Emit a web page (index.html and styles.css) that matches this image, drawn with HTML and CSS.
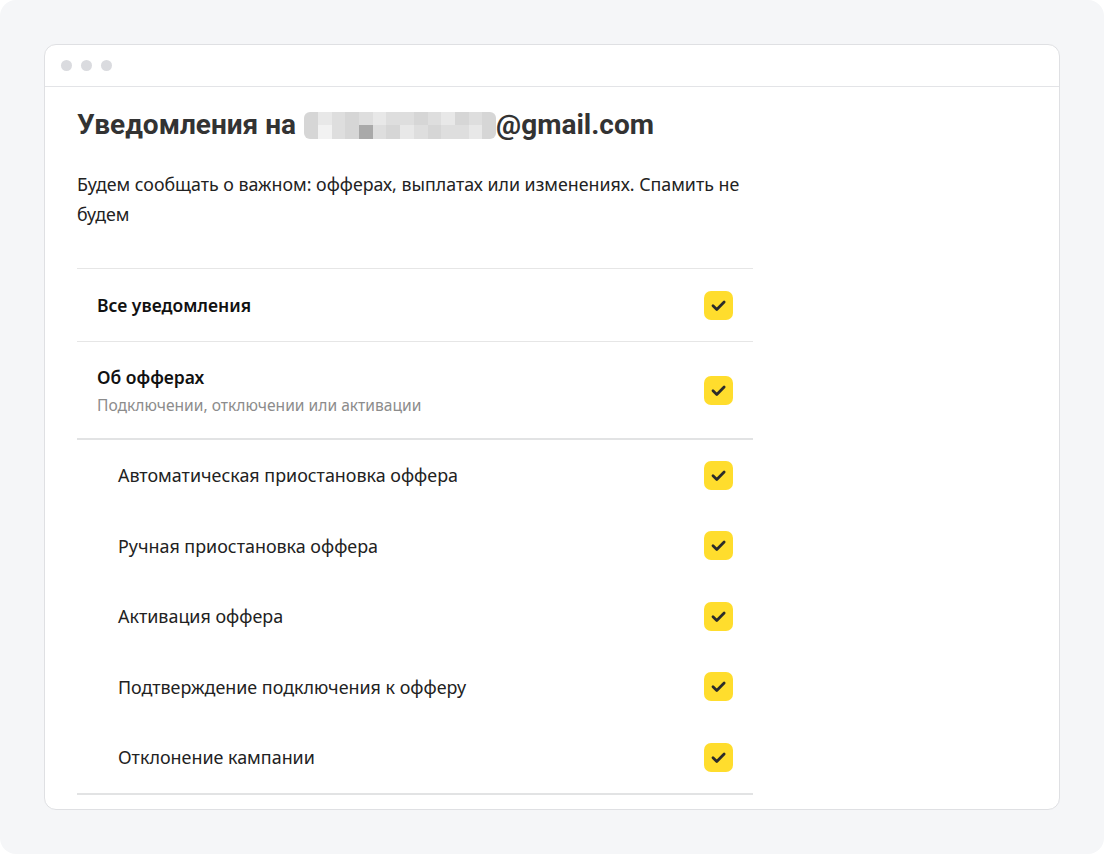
FILE: index.html
```html
<!DOCTYPE html>
<html lang="ru">
<head>
  <meta charset="UTF-8" />
  <title>Уведомления</title>
  <meta name="viewport" content="width=device-width, initial-scale=1.0" />
  <link rel="stylesheet" href="styles.css">
</head>
<body>

<div class="frame">
  <div class="window">
    <div class="window-bar">
      <span class="dot"></span>
      <span class="dot"></span>
      <span class="dot"></span>
    </div>

    <div class="content">
      <h1 class="title"><span>Уведомления на</span><span class="blur"><i class="c2"></i><i class="c4"></i><i class="c3"></i><i class="c2"></i><i class="c3"></i><i class="c4"></i><i class="c3"></i><i class="c3"></i><i class="c2"></i><i class="c3"></i><i class="c4"></i><i class="c2"></i><i class="c3"></i><i class="c2"></i><i class="c2"></i><i class="c5"></i><i class="c3"></i><i class="c2"></i><i class="c1"></i><i class="c3"></i><i class="c2"></i><i class="c4"></i><i class="c3"></i><i class="c2"></i><i class="c3"></i><i class="c3"></i><i class="c4"></i><i class="c2"></i></span><span>@gmail.com</span></h1>

      <p class="lead">Будем сообщать о важном: офферах, выплатах или изменениях. Спамить не будем</p>

      <div class="list">
        <div class="row group">
          <div class="label"><b>Все уведомления</b></div>
          <span class="check"><svg viewBox="0 0 16 16"><path d="M3.8 8.2l2.9 2.9 5.6-5.8"/></svg></span>
        </div>

        <div class="row group section">
          <div class="label">
            <b>Об офферах</b>
            <small>Подключении, отключении или активации</small>
          </div>
          <span class="check"><svg viewBox="0 0 16 16"><path d="M3.8 8.2l2.9 2.9 5.6-5.8"/></svg></span>
        </div>

        <div class="sub">
          <div class="row item">
            <div class="label">Автоматическая приостановка оффера</div>
            <span class="check"><svg viewBox="0 0 16 16"><path d="M3.8 8.2l2.9 2.9 5.6-5.8"/></svg></span>
          </div>
          <div class="row item">
            <div class="label">Ручная приостановка оффера</div>
            <span class="check"><svg viewBox="0 0 16 16"><path d="M3.8 8.2l2.9 2.9 5.6-5.8"/></svg></span>
          </div>
          <div class="row item">
            <div class="label">Активация оффера</div>
            <span class="check"><svg viewBox="0 0 16 16"><path d="M3.8 8.2l2.9 2.9 5.6-5.8"/></svg></span>
          </div>
          <div class="row item">
            <div class="label">Подтверждение подключения к офферу</div>
            <span class="check"><svg viewBox="0 0 16 16"><path d="M3.8 8.2l2.9 2.9 5.6-5.8"/></svg></span>
          </div>
          <div class="row item">
            <div class="label">Отклонение кампании</div>
            <span class="check"><svg viewBox="0 0 16 16"><path d="M3.8 8.2l2.9 2.9 5.6-5.8"/></svg></span>
          </div>
        </div>
      </div>
    </div>
  </div>
</div>

</body>
</html>
```

FILE: styles.css
```css
body {
  margin: 0;
  background-color: #ffffff;
  font-family: 'Noto Sans', 'Open Sans', sans-serif;
  color: #222;
}

.frame {
  height: 854px;
  box-sizing: border-box;
  padding: 44px;
  background-color: #f5f6f8;
  border-radius: 16px;
}

.window {
  height: 100%;
  box-sizing: border-box;
  background-color: #fff;
  border: 1px solid #dfe0e3;
  border-radius: 12px;
  overflow: hidden;
}

.window-bar {
  display: flex;
  align-items: center;
  gap: 9px;
  height: 41px;
  padding-left: 16px;
  border-bottom: 1px solid #e3e4e7;
}

.dot {
  width: 11px;
  height: 11px;
  border-radius: 50%;
  background-color: #dadbdf;
}

.content {
  padding: 20px 32px 0;
}

.title {
  display: flex;
  align-items: center;
  margin: 0;
  height: 34px;
  font-family: Roboto, 'Liberation Sans', sans-serif;
  font-size: 28px;
  font-weight: bold;
  color: #333;
}

.blur {
  display: grid;
  grid-template-columns: repeat(14, 1fr);
  width: 192px;
  height: 27px;
  margin: 2px 0 0 8px;
  border-radius: 6px;
  overflow: hidden;
}

.blur i { display: block; }
.blur .c1 { background: #a9a9a9; }
.blur .c2 { background: #d6d6d6; }
.blur .c3 { background: #dedede; }
.blur .c4 { background: #e8e8e8; }
.blur .c5 { background: #f2f2f2; }

.lead {
  width: 690px;
  margin: 28px 0 0;
  font-size: 17.8px;
  line-height: 30px;
  color: #222;
}

.list {
  width: 676px;
  margin-top: 39px;
  border-top: 1px solid #e6e6e6;
}

.row {
  display: flex;
  align-items: center;
  justify-content: space-between;
  padding: 0 20px;
}

.group {
  height: 72px;
  border-bottom: 1px solid #e6e6e6;
}

.group.section {
  height: 96px;
  border-bottom: 2px solid #e2e3e4;
}

.label b {
  display: block;
  font-size: 17.5px;
  font-weight: 600;
  color: #111;
}

.label small {
  display: block;
  margin-top: 5px;
  font-size: 15.6px;
  color: #8c8c8c;
}

.sub {
  border-bottom: 2px solid #e2e3e4;
}

.item {
  height: 70.5px;
  padding-left: 41px;
  font-size: 17.9px;
  color: #222;
}

.check {
  display: flex;
  align-items: center;
  justify-content: center;
  width: 29px;
  height: 29px;
  border-radius: 7px;
  background-color: #ffdd2d;
}

.check svg {
  width: 21px;
  height: 21px;
  fill: none;
  stroke: #2b2b2b;
  stroke-width: 2.1;
  stroke-linecap: round;
  stroke-linejoin: round;
}
```
